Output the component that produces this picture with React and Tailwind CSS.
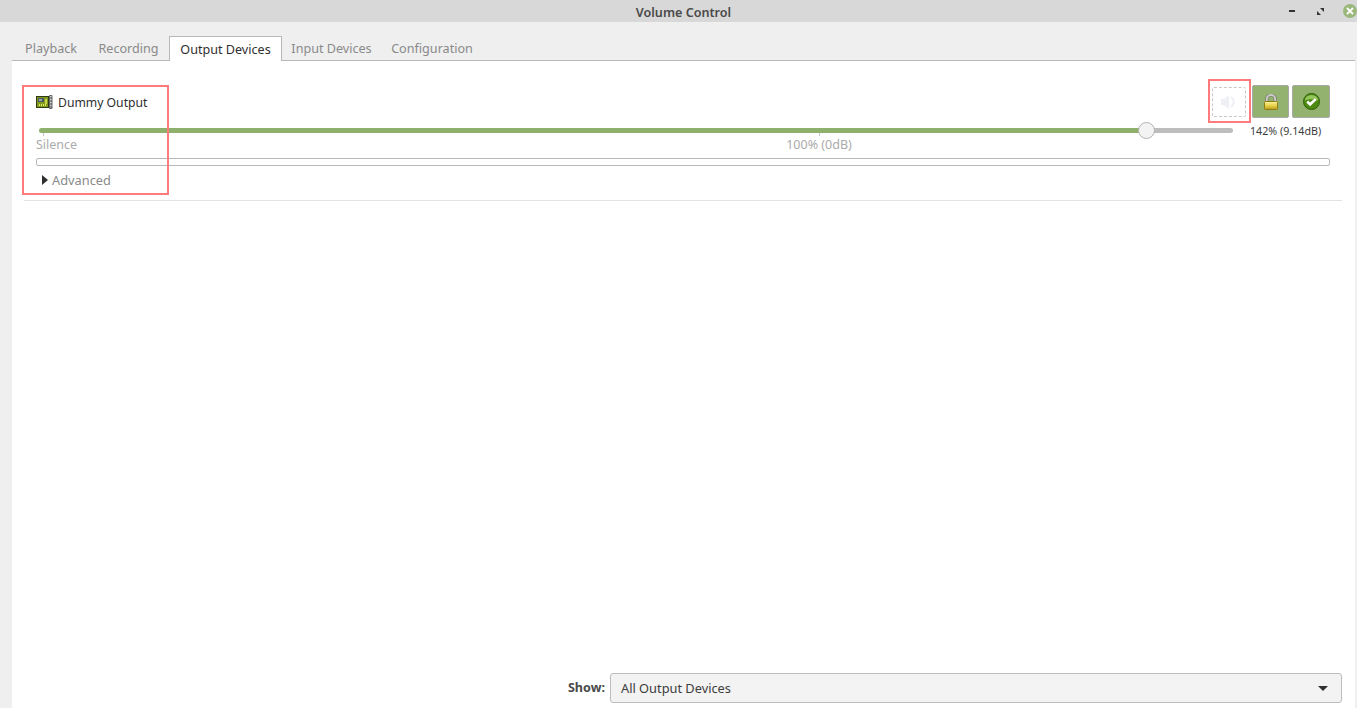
const tabs = [
    { name: 'Playback', width: 'w-[74px]' },
    { name: 'Recording', width: 'w-[81px]' },
    { name: 'Output Devices', width: 'w-[113px]', active: true },
    { name: 'Input Devices', width: 'w-[99px]' },
    { name: 'Configuration', width: 'w-[102px]' },
];

function CardIcon() {
    return (
        <svg width="17" height="16" viewBox="0 0 17 16" className="shrink-0">
            <rect x="0.5" y="2.5" width="12" height="11" fill="#7f9a1f" stroke="#2f3a12" />
            <rect x="2" y="4" width="6" height="4" fill="#4b5a5e" />
            <rect x="3" y="5" width="3" height="2" fill="#9aa7aa" />
            <rect x="9" y="5" width="2" height="5" fill="#c9d64a" />
            <path d="M3 11h7" stroke="#e2e85a" strokeWidth="2" strokeDasharray="1 1" />
            <path d="M13.5 1.5h2.5v13h-2.5z" fill="#d5d8d8" stroke="#666" strokeWidth="1" />
            <path d="M14 4h2M14 7h2M14 10h2M14 13h2" stroke="#444" />
        </svg>
    );
}

function LockIcon() {
    return (
        <svg width="14" height="16" viewBox="0 0 14 16">
            <defs>
                <linearGradient id="lockBody" x1="0" y1="0" x2="0" y2="1">
                    <stop offset="0" stopColor="#fbf3a0" />
                    <stop offset="0.5" stopColor="#e8d34a" />
                    <stop offset="1" stopColor="#b8981e" />
                </linearGradient>
            </defs>
            <path d="M2.8 8V5a4.2 4 0 0 1 8.4 0V8" fill="none" stroke="#70706a" strokeWidth="3.2" />
            <path d="M2.8 8V5a4.2 4 0 0 1 8.4 0V8" fill="none" stroke="#cdcdc7" strokeWidth="2" />
            <rect x="0.5" y="7.5" width="13" height="8" rx="1" fill="url(#lockBody)" stroke="#8f7d14" />
        </svg>
    );
}

function CheckIcon() {
    return (
        <svg width="17" height="17" viewBox="0 0 18 18">
            <circle cx="9" cy="9" r="8.5" fill="#4c8a12" stroke="#2e5c0a" />
            <path d="M2 8a7 6 0 0 1 14 0c-4-2-10-2-14 0z" fill="#93c65c" />
            <path d="M4.5 9l3 3 6-5.5" fill="none" stroke="#ffffff" strokeWidth="2.8" />
        </svg>
    );
}

function App() {
    return (
        <div className="flex h-screen flex-col overflow-hidden bg-[#efefef] font-['Noto_Sans',sans-serif] text-[12.6px] text-[#3d3d3d]">
            {/* Title bar */}
            <header className="relative flex h-[22px] shrink-0 items-center justify-center bg-[#d8d8d8] pl-[10px] pt-[5px]">
                <span className="text-[12.6px] font-semibold text-[#4a4a4a]">Volume Control</span>
                <div className="absolute right-0 top-0 flex h-[22px] items-center">
                    <span className="mr-[22px] h-[2px] w-[6px] bg-[#333]" />
                    <svg width="7" height="7" viewBox="0 0 7 7" className="mr-[19px]">
                        <path d="M3 0h4v4zM0 3l4 4H0z" fill="#333" />
                    </svg>
                    <span className="flex h-[14px] w-[14px] items-center justify-center rounded-full bg-[#9ab87c]">
                        <svg width="8" height="8" viewBox="0 0 8 8">
                            <path d="M1 1l6 6M7 1l-6 6" stroke="#fff" strokeWidth="1.8" />
                        </svg>
                    </span>
                </div>
            </header>

            {/* Tabs */}
            <nav className="ml-[12px] mr-[2px] mt-[14px] flex h-[25px] shrink-0 border-b border-[#b8b8b8] pl-[2px]">
                {tabs.map((t) =>
                    t.active ? (
                        <div key={t.name} className={`flex h-[25px] items-center justify-center border border-b-0 border-[#b8b8b8] bg-white pt-[2px] text-[#2f2f2f] ${t.width}`}>
                            {t.name}
                        </div>
                    ) : (
                        <div key={t.name} className={`flex h-[24px] items-center justify-center pt-[3px] text-[#8a8a8a] ${t.width}`}>
                            {t.name}
                        </div>
                    ),
                )}
            </nav>

            {/* Panel */}
            <main className="ml-[12px] mr-[2px] flex min-h-0 flex-1 flex-col bg-white">
                <section className="ml-[12px] mr-[13px] h-[140px] shrink-0 border-b border-[#e3e3e3] pl-[12px] pr-[12px]">
                    <div className="flex h-[46px] items-start">
                        <div className="mt-[41px] flex h-0 items-center gap-[5px] text-[12.2px] text-[#2f2f2f]">
                            <CardIcon />
                            <span className="pt-[2px]">Dummy Output</span>
                        </div>
                        <div className="ml-auto mt-[24px] flex">
                            <button className="mr-[6px] mt-[2px] flex h-[30px] w-[34px] items-center justify-center rounded-[2px] border border-dashed border-[#c8c8c8] bg-white">
                                <svg width="16" height="14" viewBox="0 0 16 14">
                                    <path d="M0 4h3l5-4v14l-5-4H0z" fill="#eef0f5" />
                                    <path d="M10 2a6 6 0 0 1 0 10" fill="none" stroke="#eef0f5" strokeWidth="2" />
                                </svg>
                            </button>
                            <button className="mr-[3px] flex h-[33px] w-[37px] items-center justify-center rounded-[2px] border border-[#a8a8a8] bg-[#93b16f]">
                                <LockIcon />
                            </button>
                            <button className="flex h-[33px] w-[38px] items-center justify-center rounded-[2px] border border-[#a8a8a8] bg-[#93b16f]">
                                <CheckIcon />
                            </button>
                        </div>
                    </div>

                    <div className="flex">
                        <div className="ml-[3px] w-[1194px] pt-[21px]">
                            {/* Slider */}
                            <div className="relative flex h-[5px] rounded-full">
                                <div className="w-[1107px] rounded-l-full bg-[#8fb06c]" />
                                <div className="flex-1 rounded-r-full bg-[#bdbdbd]" />
                                <span className="absolute left-[1099px] top-[-6px] h-[17px] w-[17px] rounded-full border border-[#b3b3b3] bg-[#f3f3f3]" />
                            </div>
                            <div className="-ml-[3px] flex">
                                <div className="w-[750px]">
                                    <div className="ml-[7px] h-[3px] w-px bg-[#c4c4c4]" />
                                    <div className="mt-[1px] text-[12.5px] leading-[15px] text-[#ababab]">Silence</div>
                                </div>
                                <div className="flex w-[66px] flex-col items-center">
                                    <div className="h-[3px] w-px bg-[#c4c4c4]" />
                                    <div className="mt-[1px] whitespace-nowrap text-[12.5px] leading-[15px] text-[#ababab]">100% (0dB)</div>
                                </div>
                            </div>
                        </div>
                        <div className="ml-[17px] pt-[17px] text-[10.7px] leading-[14px] whitespace-nowrap text-[#3d3d3d]">142% (9.14dB)</div>
                    </div>

                    <div className="mt-[6px] h-[8px] rounded-[2px] border border-[#b8b8b8] bg-white" />

                    <div className="ml-[6px] mt-[6px] flex items-center gap-[4px] text-[12.8px] leading-[16px] text-[#8a8a8a]">
                        <span className="h-0 w-0 border-y-[5px] border-l-[6px] border-y-transparent border-l-[#2f2f2f]" />
                        <span>Advanced</span>
                    </div>
                </section>

                {/* Footer */}
                <footer className="mt-auto flex items-center justify-end pb-[5px] pr-[13px]">
                    <span className="mr-[5px] pt-[1px] text-[12.6px] font-bold text-[#4a4a4a]">Show:</span>
                    <div className="flex h-[30px] w-[732px] items-center justify-between rounded-[3px] border border-[#bdbdbd] bg-[#f3f3f3] pl-[10px] pr-[13px] pt-[2px] text-[12.8px] text-[#3d3d3d]">
                        <span>All Output Devices</span>
                        <span className="-mt-[2px] h-0 w-0 border-x-[5px] border-t-[5px] border-x-transparent border-t-[#2f2f2f]" />
                    </div>
                </footer>
            </main>

            {/* Red annotation boxes */}
            <div className="pointer-events-none absolute left-[22px] top-[85px] h-[110px] w-[147px] border-2 border-[#ff7b7b]" />
            <div className="pointer-events-none absolute left-[1208px] top-[79px] h-[44px] w-[43px] border-2 border-[#ff7b7b]" />
        </div>
    );
}

export default App;
